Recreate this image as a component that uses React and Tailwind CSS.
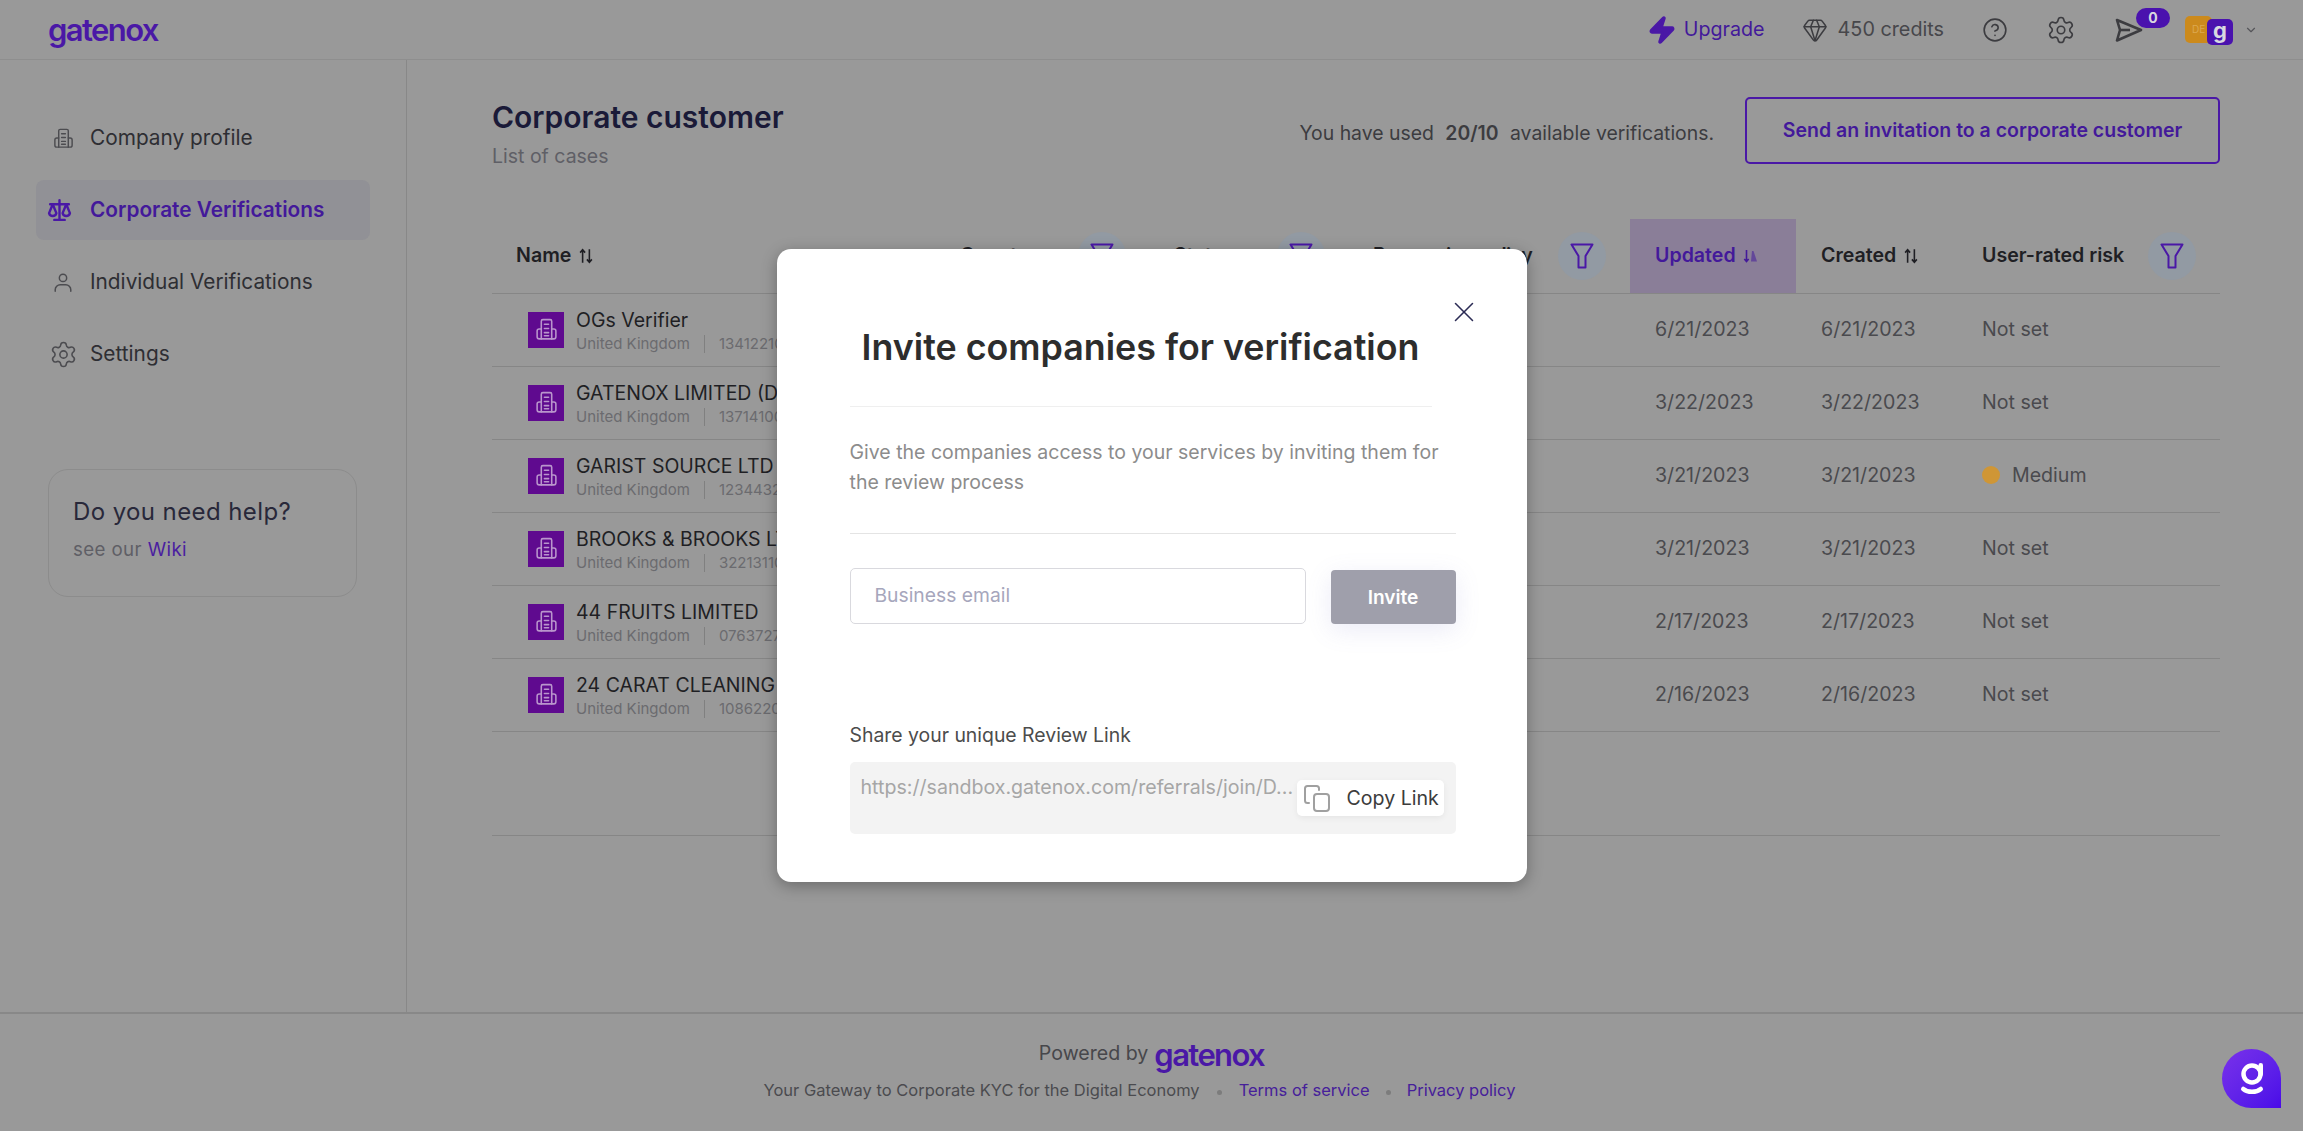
import { Zap, Gem, CircleHelp, Settings, ChevronDown, X } from 'lucide-react'

const rows = [
  { name: 'OGs Verifier', num: '13412210', updated: '6/21/2023', created: '6/21/2023', risk: 'Not set' },
  { name: 'GATENOX LIMITED (DEMO)', num: '13714100', updated: '3/22/2023', created: '3/22/2023', risk: 'Not set' },
  { name: 'GARIST SOURCE LTD', num: '12344321', updated: '3/21/2023', created: '3/21/2023', risk: 'Medium' },
  { name: 'BROOKS & BROOKS LTD', num: '32213110', updated: '3/21/2023', created: '3/21/2023', risk: 'Not set' },
  { name: '44 FRUITS LIMITED', num: '07637270', updated: '2/17/2023', created: '2/17/2023', risk: 'Not set' },
  { name: '24 CARAT CLEANING LTD', num: '10862200', updated: '2/16/2023', created: '2/16/2023', risk: 'Not set' },
]

const BuildingIcon = ({ className }) => (
  <svg viewBox="0 0 24 24" fill="none" stroke="currentColor" strokeWidth="1.5" strokeLinecap="round" strokeLinejoin="round" className={className}>
    <path d="M7 21V4A1.5 1.5 0 0 1 8.5 2.5h7A1.5 1.5 0 0 1 17 4v17" />
    <path d="M7 11.5H5a2 2 0 0 0-2 2V19a2 2 0 0 0 2 2h14a2 2 0 0 0 2-2v-5.500a2 2 0 0 0-2-2h-2" />
    <path d="M10 7h4M10 11h4M10 15h4M10 18h4" />
  </svg>
)

const ScaleIcon = ({ className }) => (
  <svg viewBox="0 0 24 24" fill="none" stroke="currentColor" strokeWidth="2.3" strokeLinecap="round" strokeLinejoin="round" className={className}>
    <path d="M12 2v19M7 21h10M3 6h18" />
    <path d="M5.500 6 2 14.500a3.600 3.600 0 0 0 7 0L5.500 6Z" />
    <path d="M18.500 6 15 14.500a3.600 3.600 0 0 0 7 0L18.500 6Z" />
  </svg>
)

const UserIcon = ({ className }) => (
  <svg viewBox="0 0 24 24" fill="none" stroke="currentColor" strokeWidth="1.6" strokeLinecap="round" className={className}>
    <circle cx="12" cy="7.500" r="4" />
    <path d="M3.500 22v-1.500a5.500 5.500 0 0 1 5.500-5.500h6a5.500 5.500 0 0 1 5.500 5.500V22" />
  </svg>
)

const SendIcon = ({ className }) => (
  <svg viewBox="0 0 28 24" fill="none" stroke="currentColor" strokeWidth="2.600" strokeLinejoin="round" className={className}>
    <path d="M2 2 26 12 2 22.500 5 12Z" />
    <path d="M5 12h10" />
  </svg>
)

const FilterIcon = ({ className }) => (
  <svg viewBox="0 0 24 26" fill="none" stroke="currentColor" strokeWidth="2" strokeLinejoin="round" className={className}>
    <path d="M1.500 1.500h21L15.500 13v11.500h-7V13Z" />
  </svg>
)

const SortIcon = ({ className }) => (
  <svg viewBox="0 0 16 16" fill="none" stroke="currentColor" strokeWidth="1.400" className={className}>
    <path d="M5 14V2.500M2.800 5 5 2.500 7.200 5" />
    <path d="M11 2v11.500M8.800 11l2.200 2.500 2.200-2.500" />
  </svg>
)

const SortDownIcon = ({ className }) => (
  <svg viewBox="0 0 16 16" className={className}>
    <path d="M4.500 2v11.500M2.300 11l2.200 2.500L6.700 11" fill="none" stroke="currentColor" strokeWidth="1.600" />
    <path d="M10 3l1.500 0 3.500 10.500H9Z" fill="currentColor" opacity="0.55" />
  </svg>
)

const CopyIcon = ({ className }) => (
  <svg viewBox="0 0 28 28" fill="none" stroke="currentColor" strokeWidth="2" strokeLinecap="round" className={className}>
    <rect x="11" y="10" width="15" height="17" rx="3" />
    <path d="M6 19H4.500A2.500 2.500 0 0 1 2 16.500v-12A2.500 2.500 0 0 1 4.500 2h9A2.500 2.500 0 0 1 16 4.500V6" />
  </svg>
)

const Logo = ({ className }) => (
  <span className={`font-semibold leading-none tracking-[-1.600px] text-[#4a18a6] ${className}`}>gatenox</span>
)

const NavItem = ({ icon, label, active }) => (
  <div className={`flex h-[60px] w-[334px] items-center gap-[12px] rounded-lg pl-3 text-[20.8px] ${active ? 'bg-[#919196] font-semibold text-[#43199a]' : 'text-[#2e2e33]'}`}>
    <span className="flex w-[30px] justify-center">{icon}</span>
    {label}
  </div>
)

const HeadCell = ({ label, filter, className = 'px-6' }) => (
  <th className={`text-left font-semibold ${className}`}>
    <div className="flex items-center justify-between whitespace-nowrap">
      {label}
      {filter && (
        <span className="flex h-[48px] w-[48px] items-center justify-center rounded-full bg-[#929aa3]">
          <FilterIcon className="h-[26px] w-[24px] text-[#4a18a6]" />
        </span>
      )}
    </div>
  </th>
)

export default function App() {
  return (
    <div className="relative flex h-[1131px] flex-col overflow-hidden bg-[#999999] font-['Inter',sans-serif] text-[#2e2e33]">
      <header className="flex h-[60px] shrink-0 items-center justify-between border-b border-[#8e8e8e] pl-[48px] pr-[45px]">
        <Logo className="text-[31px]" />
        <div className="flex items-center">
          <Zap className="h-[30px] w-[30px] fill-[#4a18a6] text-[#4a18a6]" />
          <span className="ml-[7px] text-[19.700px] text-[#43199a]">Upgrade</span>
          <Gem className="ml-[37px] h-[26px] w-[26px] text-[#3c3c40]" strokeWidth={1.4} />
          <span className="ml-[10px] text-[19.800px] text-[#47474b]">450 credits</span>
          <CircleHelp className="ml-[38px] h-[26px] w-[26px] text-[#3c3c40]" strokeWidth={1.5} />
          <Settings className="ml-[38px] h-[30px] w-[30px] text-[#3c3c40]" strokeWidth={1.3} />
          <div className="relative ml-[39px] h-[24px] w-[28px]">
            <SendIcon className="h-[24px] w-[28px] text-[#3c3c40]" />
            <span className="absolute -top-[10px] left-[21px] flex h-[20px] w-[34px] items-center justify-center rounded-full bg-[#4a12ae] text-[14px] font-bold leading-none text-[#d8d8e0]">0</span>
          </div>
          <div className="relative ml-[42px] h-[30px] w-[48px]">
            <span className="absolute left-0 top-[1px] flex h-[27px] w-[27px] items-center rounded-[5px] bg-[#cc8a1c] pl-[7px] text-[10px] text-[#dca850]">DE</span>
            <span className="absolute left-[22px] top-[4px] flex h-[26px] w-[26px] items-center justify-center rounded-[5px] bg-[#4a12ae] pb-[3px] text-[22px] font-bold text-[#d8d8e0]">g</span>
          </div>
          <ChevronDown className="ml-[11px] h-[14px] w-[14px] text-[#55555a]" />
        </div>
      </header>

      <div className="flex min-h-0 flex-1">
        <aside className="w-[407px] shrink-0 border-r border-[#888888] pl-[36px] pt-[48px]">
          <nav className="flex flex-col gap-[12px]">
            <NavItem label="Company profile" icon={<BuildingIcon className="h-[23px] w-[23px] text-[#4c4c50]" />} />
            <NavItem active label="Corporate Verifications" icon={<ScaleIcon className="-ml-[7px] h-[25px] w-[25px] text-[#4a18a6]" />} />
            <NavItem label="Individual Verifications" icon={<UserIcon className="h-[22px] w-[22px] text-[#4c4c50]" />} />
            <NavItem label="Settings" icon={<Settings className="h-[29px] w-[29px] text-[#4c4c50]" strokeWidth={1.3} />} />
          </nav>
          <div className="ml-[12px] mt-[85px] h-[128px] w-[309px] rounded-[20px] border border-[#8c8c8c] pl-[25px] pt-[26px]">
            <h3 className="-ml-[1px] text-[24px] leading-[32px] tracking-[0.4px] text-[#28283a]">Do you need help?</h3>
            <p className="-ml-[1px] mt-[10px] text-[18.700px] leading-[24px] tracking-[0.4px] text-[#5f5f66]">
              see our <span className="text-[#4a20a0]">Wiki</span>
            </p>
          </div>
        </aside>

        <main className="min-w-0 flex-1 pl-[85px] pr-[83px] pt-[37px]">
          <div className="flex items-start justify-between">
            <div className="pt-[2px]">
              <h1 className="text-[30px] font-semibold leading-[36px] text-[#1a1a38]">Corporate customer</h1>
              <p className="mt-[8px] text-[19.500px] leading-[26px] text-[#5f5f66]">List of cases</p>
            </div>
            <div className="flex items-center gap-[31px]">
              <p className="pt-[6px] text-[19.400px] text-[#3c3c40]">
                You have used <b className="mx-[6px] font-semibold">20/10</b> available verifications.
              </p>
              <button className="h-[67px] w-[475px] rounded-[5px] border-2 border-[#4a18a6] text-[19.500px] font-semibold text-[#43199a]">
                Send an invitation to a corporate customer
              </button>
            </div>
          </div>

          <table className="mt-[50px] w-full table-fixed border-collapse text-[19.600px]">
            <colgroup>
              <col className="w-[444px]" />
              <col className="w-[214px]" />
              <col className="w-[199px]" />
              <col className="w-[281px]" />
              <col className="w-[166px]" />
              <col className="w-[162px]" />
              <col />
            </colgroup>
            <thead>
              <tr className="h-[74px] border-b border-[#868686] text-[#1f1f24]">
                <HeadCell label={<span className="flex items-center gap-[6px]">Name <SortIcon className="h-[18px] w-[18px]" /></span>} />
                <HeadCell label="Country" filter />
                <HeadCell label="Status" filter />
                <HeadCell label={<span className="tracking-[-0.5px]">Processing policy</span>} filter />
                <th className="bg-[#8a7e98] pl-[25px] pr-6 text-left font-semibold text-[#43199a]">
                  <span className="flex items-center gap-[6px]">Updated <SortDownIcon className="h-[16px] w-[16px]" /></span>
                </th>
                <HeadCell className="pl-[25px] pr-6" label={<span className="flex items-center gap-[6px]">Created <SortIcon className="h-[18px] w-[18px]" /></span>} />
                <HeadCell label="User-rated risk" filter />
              </tr>
            </thead>
            <tbody>
              {rows.map((row) => (
                <tr key={row.name} className="h-[73px] border-b border-[#868686] text-[#4a4a4e]">
                  <td className="pl-9">
                    <div className="flex items-center gap-3">
                      <span className="flex h-[36px] w-[36px] shrink-0 items-center justify-center bg-[#5f0a8f]">
                        <BuildingIcon className="h-[25px] w-[25px] text-[#b995cc]" />
                      </span>
                      <div className="whitespace-nowrap pt-[3px]">
                        <div className="text-[19.500px] leading-[24px] text-[#1f1f24]">{row.name}</div>
                        <div className="mt-[1px] flex items-center text-[15px] leading-[22px] text-[#6b6b6f]">
                          United Kingdom
                          <span className="mx-[14px] h-[18px] w-px bg-[#808080]" />
                          {row.num}
                        </div>
                      </div>
                    </div>
                  </td>
                  <td />
                  <td />
                  <td />
                  <td className="pl-[25px] pr-6">{row.updated}</td>
                  <td className="pl-[25px] pr-6">{row.created}</td>
                  <td className="px-6">
                    {row.risk === 'Medium' ? (
                      <span className="flex items-center gap-[12px]">
                        <span className="h-[18px] w-[18px] rounded-full bg-[#cf9636]" />
                        Medium
                      </span>
                    ) : (
                      row.risk
                    )}
                  </td>
                </tr>
              ))}
            </tbody>
          </table>
          <div className="h-[104px] border-b border-[#868686]" />
        </main>
      </div>

      <footer className="flex h-[119px] shrink-0 flex-col items-center border-t-2 border-[#888888] pt-[24px]">
        <div className="flex h-[32px] items-center gap-[6px] text-[19.600px] text-[#47474b]">
          Powered by <Logo className="text-[31px]" />
        </div>
        <div className="mt-[8px] flex items-center pr-[24px] text-[16.500px] leading-[24px] text-[#4b4b4f]">
          Your Gateway to Corporate KYC for the Digital Economy
          <span className="mx-[17px] mt-[4px] h-[5px] w-[5px] rounded-full bg-[#7c7c7c]" />
          <span className="text-[#46209a]">Terms of service</span>
          <span className="mx-[16px] mt-[4px] h-[5px] w-[5px] rounded-full bg-[#7c7c7c]" />
          <span className="text-[#46209a]">Privacy policy</span>
        </div>
      </footer>

      <div className="absolute inset-0 flex items-center justify-center">
        <div className="relative h-[633px] w-[750px] rounded-[14px] bg-white pl-[73px] pr-[71px] pt-[76px] shadow-[0_4px_16px_rgba(0,0,0,0.3)]">
          <X className="absolute right-[46px] top-[46px] h-[34px] w-[34px] text-[#2c2c55]" strokeWidth={1.1} />
          <h2 className="w-[582px] text-center text-[35.800px] font-semibold leading-[44px] text-[#2d2d2d]">Invite companies for verification</h2>
          <div className="mt-[37px] h-px w-[582px] bg-[#efefef]" />
          <p className="mt-[30px] text-[19.500px] leading-[30px] text-[#8c8c8c]">
            Give the companies access to your services by inviting them for the review process
          </p>
          <div className="mt-[36px] h-px bg-[#e4e4e4]" />
          <div className="mt-[34px] flex items-start justify-between">
            <div className="flex h-[56px] w-[456px] items-center rounded-[5px] border border-[#d9d9de] pb-[2px] pl-[24px] text-[19.300px] text-[#a6a6bc]">
              Business email
            </div>
            <button className="mt-[2px] h-[54px] w-[125px] rounded-[4px] bg-[#9f9fab] text-[19.100px] font-semibold text-white shadow-[0_6px_24px_rgba(120,120,200,0.15)]">
              Invite
            </button>
          </div>
          <p className="mt-[99px] text-[19.400px] leading-[24px] text-[#4c4c4c]">Share your unique Review Link</p>
          <div className="relative mt-[15px] h-[72px] rounded-[5px] bg-[#f3f3f3] pl-[11px] pt-[13px] text-[19.600px] leading-[24px] text-[#a6a6a6]">
            https://sandbox.gatenox.com/referrals/join/D...
            <div className="absolute right-[12px] top-[18px] flex h-[36px] w-[147px] items-center rounded-[5px] bg-white pl-[6px] text-[#3c3c3c] shadow-[0_2px_6px_rgba(0,0,0,0.06)]">
              <CopyIcon className="h-[28px] w-[28px] text-[#a0a0a0]" />
              <span className="ml-[16px] whitespace-nowrap">Copy Link</span>
            </div>
          </div>
        </div>
      </div>

      <div className="absolute bottom-[23px] right-[22px] flex h-[59px] w-[59px] items-center justify-center rounded-full rounded-br-[6px] bg-gradient-to-br from-[#7a30ea] to-[#4a08e8]">
        <svg viewBox="0 0 24 28" fill="none" stroke="white" strokeWidth="3.600" strokeLinecap="round" className="h-[36px] w-[30px]">
          <circle cx="12" cy="10" r="6.800" />
          <path d="M19 3v7" />
          <path d="M5 22c3.500 3 10.500 3 14 0" />
        </svg>
      </div>
    </div>
  )
}
